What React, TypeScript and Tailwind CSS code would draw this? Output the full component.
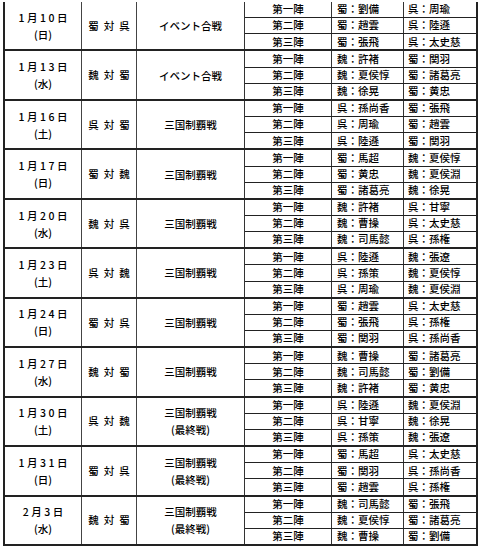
import React from 'react';

type Bout = { a: string; b: string };
type Match = { date: string; day: string; vs: string[]; event: string[]; bouts: Bout[] };

const jin = ['第一陣', '第二陣', '第三陣'];

const matches: Match[] = [
    { date: '1月10日', day: '(日)', vs: ['蜀', '対', '呉'], event: ['イベント合戦'], bouts: [
        { a: '蜀：劉備', b: '呉：周瑜' }, { a: '蜀：趙雲', b: '呉：陸遜' }, { a: '蜀：張飛', b: '呉：太史慈' }] },
    { date: '1月13日', day: '(水)', vs: ['魏', '対', '蜀'], event: ['イベント合戦'], bouts: [
        { a: '魏：許褚', b: '蜀：関羽' }, { a: '魏：夏侯惇', b: '蜀：諸葛亮' }, { a: '魏：徐晃', b: '蜀：黄忠' }] },
    { date: '1月16日', day: '(土)', vs: ['呉', '対', '蜀'], event: ['三国制覇戦'], bouts: [
        { a: '呉：孫尚香', b: '蜀：張飛' }, { a: '呉：周瑜', b: '蜀：趙雲' }, { a: '呉：陸遜', b: '蜀：関羽' }] },
    { date: '1月17日', day: '(日)', vs: ['蜀', '対', '魏'], event: ['三国制覇戦'], bouts: [
        { a: '蜀：馬超', b: '魏：夏侯惇' }, { a: '蜀：黄忠', b: '魏：夏侯淵' }, { a: '蜀：諸葛亮', b: '魏：徐晃' }] },
    { date: '1月20日', day: '(水)', vs: ['魏', '対', '呉'], event: ['三国制覇戦'], bouts: [
        { a: '魏：許褚', b: '呉：甘寧' }, { a: '魏：曹操', b: '呉：太史慈' }, { a: '魏：司馬懿', b: '呉：孫権' }] },
    { date: '1月23日', day: '(土)', vs: ['呉', '対', '魏'], event: ['三国制覇戦'], bouts: [
        { a: '呉：陸遜', b: '魏：張遼' }, { a: '呉：孫策', b: '魏：夏侯惇' }, { a: '呉：周瑜', b: '魏：夏侯淵' }] },
    { date: '1月24日', day: '(日)', vs: ['蜀', '対', '呉'], event: ['三国制覇戦'], bouts: [
        { a: '蜀：趙雲', b: '呉：太史慈' }, { a: '蜀：張飛', b: '呉：孫権' }, { a: '蜀：関羽', b: '呉：孫尚香' }] },
    { date: '1月27日', day: '(水)', vs: ['魏', '対', '蜀'], event: ['三国制覇戦'], bouts: [
        { a: '魏：曹操', b: '蜀：諸葛亮' }, { a: '魏：司馬懿', b: '蜀：劉備' }, { a: '魏：許褚', b: '蜀：黄忠' }] },
    { date: '1月30日', day: '(土)', vs: ['呉', '対', '魏'], event: ['三国制覇戦', '(最終戦)'], bouts: [
        { a: '呉：陸遜', b: '魏：夏侯淵' }, { a: '呉：甘寧', b: '魏：徐晃' }, { a: '呉：孫策', b: '魏：張遼' }] },
    { date: '1月31日', day: '(日)', vs: ['蜀', '対', '呉'], event: ['三国制覇戦', '(最終戦)'], bouts: [
        { a: '蜀：馬超', b: '呉：太史慈' }, { a: '蜀：関羽', b: '呉：孫尚香' }, { a: '蜀：趙雲', b: '呉：孫権' }] },
    { date: '2月3日', day: '(水)', vs: ['魏', '対', '蜀'], event: ['三国制覇戦', '(最終戦)'], bouts: [
        { a: '魏：司馬懿', b: '蜀：張飛' }, { a: '魏：夏侯惇', b: '蜀：諸葛亮' }, { a: '魏：曹操', b: '蜀：劉備' }] },
];

const App: React.FC = () => {
    return (
        <div
            className="w-[480px] h-[552px] bg-white pl-[3px] pt-[2px] text-[10.5px] font-medium text-black"
            style={{ fontFamily: '"Noto Sans CJK JP", "Noto Sans", sans-serif' }}
        >
            <div className="w-[475px] h-[544px] grid grid-rows-[repeat(11,1fr)] border-l-2 border-r-2 border-[#222]">
                {matches.map((m, i) => (
                    <div key={i} className="flex border-b-2 border-[#222] min-h-0">
                        <div className="w-[77px] flex flex-col items-center justify-center border-r border-[#444] leading-[17px]">
                            <span className="tracking-[2.5px] pl-[2.5px]">{m.date}</span>
                            <span>{m.day}</span>
                        </div>
                        <div className="w-[55px] flex items-center justify-center gap-[5px] border-r border-[#444]">
                            {m.vs.map((c, k) => (
                                <span key={k}>{c}</span>
                            ))}
                        </div>
                        <div className="w-[108px] flex flex-col items-center justify-center border-r border-[#333] leading-[17px]">
                            {m.event.map((e, k) => (
                                <span key={k}>{e}</span>
                            ))}
                        </div>
                        <div className="flex-1 flex flex-col">
                            {m.bouts.map((b, k) => (
                                <div
                                    key={k}
                                    className={`flex-1 flex items-center leading-none ${k < 2 ? 'border-b border-[#222]' : ''}`}
                                >
                                    <div className="w-[87px] h-full flex items-center justify-center border-r border-[#333]">{jin[k]}</div>
                                    <div className="w-[72px] h-full flex items-center pl-[5px] border-r border-[#333]">{b.a}</div>
                                    <div className="flex-1 h-full flex items-center pl-[4px]">{b.b}</div>
                                </div>
                            ))}
                        </div>
                    </div>
                ))}
            </div>
        </div>
    );
};

export default App;
